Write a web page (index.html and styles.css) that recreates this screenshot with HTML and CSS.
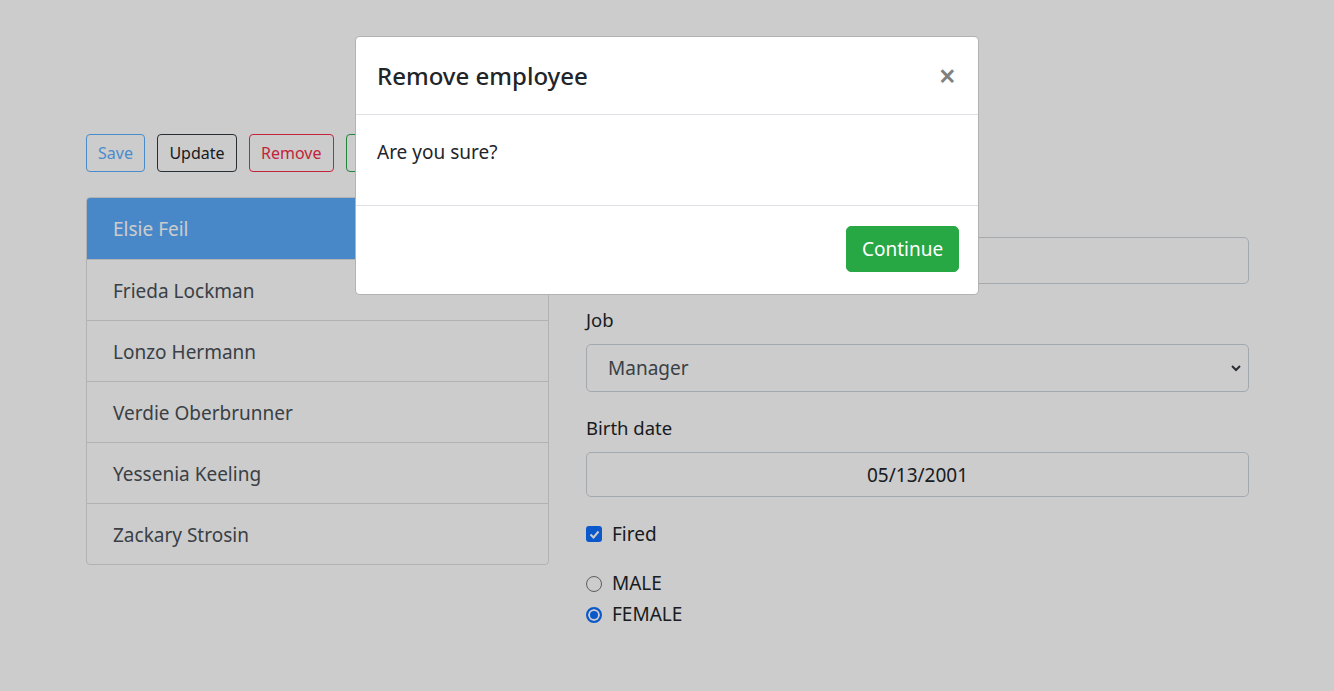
FILE: index.html
```html
<!DOCTYPE html>
<html lang="en">
<head>
<meta charset="utf-8">
<title>Employees</title>
<link rel="stylesheet" href="styles.css">
</head>
<body>
<main class="page">
  <div class="toolbar">
    <button class="btn btn-save">Save</button>
    <button class="btn btn-update">Update</button>
    <button class="btn btn-remove">Remove</button>
    <button class="btn btn-new">New</button>
  </div>
  <div class="content">
    <ul class="list">
      <li class="item active">Elsie Feil</li>
      <li class="item">Frieda Lockman</li>
      <li class="item">Lonzo Hermann</li>
      <li class="item">Verdie Oberbrunner</li>
      <li class="item">Yessenia Keeling</li>
      <li class="item">Zackary Strosin</li>
    </ul>
    <form class="form">
      <div class="group">
        <label class="label">Name</label>
        <input class="control" type="text" value="Elsie Feil">
      </div>
      <div class="group">
        <label class="label">Job</label>
        <div class="select">
          <span>Manager</span>
          <svg width="12" height="8" viewBox="0 0 12 8"><path d="M2 2l4 4 4-4" fill="none" stroke="#343a40" stroke-width="2"/></svg>
        </div>
      </div>
      <div class="group">
        <label class="label">Birth date</label>
        <div class="control date">05/13/2001</div>
      </div>
      <div class="check">
        <span class="checkbox"><svg width="11" height="9" viewBox="0 0 11 9"><path d="M1.5 4.5l3 3 5-6" fill="none" stroke="#fff" stroke-width="2"/></svg></span>
        <span>Fired</span>
      </div>
      <div class="radios">
        <div class="radio-row"><span class="radio"></span><span>MALE</span></div>
        <div class="radio-row"><span class="radio on"></span><span>FEMALE</span></div>
      </div>
    </form>
  </div>
</main>
<div class="backdrop"></div>
<div class="modal-wrap">
  <div class="modal">
    <div class="modal-header">
      <h5 class="modal-title">Remove employee</h5>
      <span class="close">&times;</span>
    </div>
    <div class="modal-body">
      <p>Are you sure?</p>
    </div>
    <div class="modal-footer">
      <button class="btn-continue">Continue</button>
    </div>
  </div>
</div>
</body>
</html>
```
FILE: styles.css
```css
* { box-sizing: border-box; }
html, body { margin: 0; padding: 0; }
body {
  background: #fff;
  color: #212529;
  font-family: "Noto Sans", "Open Sans", sans-serif;
  width: 1334px;
  height: 691px;
  overflow: hidden;
  position: relative;
}
.page {
  padding: 134px 85px 0 86px;
}
.toolbar {
  display: flex;
  gap: 12.5px;
  height: 38px;
}
.btn {
  font-family: inherit;
  font-size: 16px;
  height: 38px;
  padding: 0 11px;
  background: transparent;
  border: 1px solid;
  border-radius: 4px;
}
.btn-save { color: #5cb0ff; border-color: #5cb0ff; }
.btn-update { color: #212529; border-color: #343a40; }
.btn-remove { color: #f32d4b; border-color: #f32d4b; }
.btn-new { color: #28a745; border-color: #28a745; padding: 0 14px; }
.content {
  display: grid;
  grid-template-columns: 463px 663px;
  column-gap: 37px;
  margin-top: 25px;
}
.list {
  list-style: none;
  margin: 0;
  padding: 0;
  border: 1px solid #dfdfdf;
  border-radius: 4px;
  overflow: hidden;
  align-self: start;
}
.item {
  font-size: 19px;
  line-height: 30px;
  padding: 16px 26px 14px;
  color: #495057;
  border-top: 1px solid #dfdfdf;
}
.item:first-child { border-top: none; padding-top: 16px; padding-bottom: 15px; }
.item.active { background: #5cabfb; color: #fff; }
.form {
  padding-top: 1px;
}
.group { margin-bottom: 21px; }
.label {
  display: block;
  font-size: 18.5px;
  line-height: 30px;
  margin-bottom: 9px;
  color: #212529;
}
.control {
  display: block;
  width: 100%;
  height: 47px;
  border: 1px solid #ced4da;
  border-radius: 5px;
  font-family: inherit;
  font-size: 19px;
  padding: 0 21px;
  color: #495057;
  background: #fff;
}
.select {
  height: 48px;
  border: 1px solid #ced4da;
  border-radius: 5px;
  display: flex;
  align-items: center;
  justify-content: space-between;
  padding: 0 6px 0 21px;
  font-size: 19px;
  color: #495057;
}
.date {
  height: 45px;
  display: flex;
  align-items: center;
  justify-content: center;
  color: #212529;
}
.check {
  display: flex;
  align-items: center;
  gap: 10px;
  font-size: 19px;
  line-height: 30px;
  margin-top: 22px;
}
.checkbox {
  width: 16px;
  height: 16px;
  border-radius: 3px;
  background: #0d6efd;
  display: flex;
  align-items: center;
  justify-content: center;
}
.radios { margin-top: 19px; }
.radio-row {
  display: flex;
  align-items: center;
  gap: 10px;
  font-size: 19px;
  line-height: 31px;
}
.radio {
  width: 16px;
  height: 16px;
  border-radius: 50%;
  border: 1px solid #767676;
  background: #fff;
}
.radio.on {
  border: 2px solid #0d6efd;
  box-shadow: inset 0 0 0 2px #fff;
  background: #0d6efd;
}
.backdrop {
  position: absolute;
  inset: 0;
  background: rgba(0, 0, 0, 0.2);
}
.modal-wrap {
  position: absolute;
  inset: 0;
  display: flex;
  justify-content: center;
  align-items: flex-start;
  padding-top: 36px;
}
.modal {
  width: 624px;
  background: #fff;
  border: 1px solid rgba(0, 0, 0, 0.3);
  border-radius: 5px;
}
.modal-header {
  display: flex;
  justify-content: space-between;
  align-items: center;
  height: 78px;
  padding: 0 20px 0 21px;
  border-bottom: 1px solid #dee2e6;
}
.modal-title {
  margin: 0;
  font-size: 24px;
  font-weight: 500;
  color: #212529;
}
.close {
  font-size: 30px;
  font-weight: 600;
  color: #808080;
  line-height: 1;
  margin-right: 2px;
}
.modal-body {
  padding: 24px 21px 20px;
  height: 90px;
}
.modal-body p {
  margin: 0;
  font-size: 19px;
  line-height: 27px;
}
.modal-footer {
  display: flex;
  justify-content: flex-end;
  padding: 20px 19px 22px;
  border-top: 1px solid #dee2e6;
}
.btn-continue {
  font-family: inherit;
  font-size: 19px;
  color: #fff;
  background: #28a745;
  border: 1px solid #28a745;
  border-radius: 5px;
  height: 46px;
  width: 113px;
}
```
